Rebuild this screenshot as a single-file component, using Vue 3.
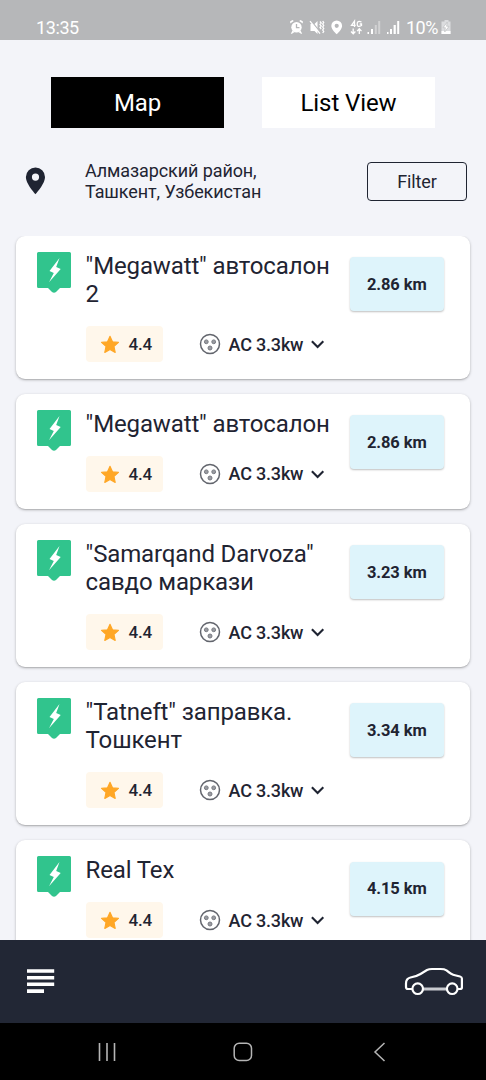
<script setup>
const stations = [
  { lines: ['"Megawatt" автосалон', '2'], distance: '2.86' },
  { lines: ['"Megawatt" автосалон'], distance: '2.86' },
  { lines: ['"Samarqand Darvoza"', 'савдо маркази'], distance: '3.23' },
  { lines: ['"Tatneft" заправка.', 'Тошкент'], distance: '3.34' },
  { lines: ['Real Tex'], distance: '4.15' },
]
</script>

<template>
  <div class="screen">
    <header class="status">
      <span class="clock">13:35</span>
      <svg class="tray" width="118" height="18" viewBox="0 0 118 18">
        <g fill="#fff">
          <circle cx="6.5" cy="9.2" r="5.2" />
          <path d="M.2 5.4V3.2L2.6 2l1.2 1zM12.8 5.4V3.2L10.4 2 9.200 3zM2.500 12.500l2 1.500L2 15.800H.8zM10.500 12.500l-2 1.500 2.500 1.800h1.200z" />
          <path d="M20.500 6h4l3-3v13l-3-3h-4z" />
          <path d="M46.700 2.500a5.400 5.400 0 0 0-5.400 5.400c0 3.500 5.400 8.300 5.400 8.300s5.400-4.800 5.400-8.300a5.400 5.400 0 0 0-5.400-5.400zm0 3.200a2.100 2.100 0 1 1 0 4.200 2.100 2.100 0 0 1 0-4.200z" fill-rule="evenodd" />
          <path d="M77.500 14h1.500v2h-1.500zM81 11h2v5h-2zM97 14h1.500v2H97zM100 11h2v5h-2zM103.600 7h2.200v9h-2.200zM107.200 3h2v13h-2z" />
          <path d="M84.800 7h2v9h-2zM88.200 3h2v13h-2z" opacity=".38" />
        </g>
        <g fill="none" stroke="#fff" stroke-width="1.300">
          <path d="M6.500 6v3.700h3" stroke="#b6b7b9" />
          <path d="M21.200 3l9.600 12" stroke="#b6b7b9" />
          <path d="M20 3.200l10 12.500" />
          <path d="M30 3.500l1.200 1.500-1.200 1.500 1.200 1.500-1.200 1.500 1.200 1.500M32.700 3l1 1.500-1 1.500 1 1.500-1 1.500 1 1.500-1 1.500 1 1.500-1 1.500" />
          <path d="M64.500 8.900V3l-3 4.300h4.200M71.500 4q-4.300-1.800-4.300 2t4.300 1.500V6h-1.800M63.200 10.500v5.300m-2.200-2.300l2.200 2.300 2.200-2.300M69.300 16v-5.200m-2.200 2.300l2.200-2.300 2.200 2.300" />
        </g>
      </svg>
      <span class="percent">10%</span>
      <svg class="battery" width="11" height="16" viewBox="0 0 11 16">
        <path d="M3.500 1h4v1.500h2V15h-9V2.500h3z" fill="#dcdddf" />
        <path d="M.5 12h9v3h-9z" fill="#fff" />
        <path d="M6.200 3.200L2 8.700h2.400L3.700 13l4.300-5.700H5.600z" fill="#fff" stroke="#b6b7b9" stroke-width=".6" />
      </svg>
    </header>

    <nav class="tabs">
      <button class="tab active">Map</button>
      <button class="tab">List View</button>
    </nav>

    <section class="place">
      <svg class="pin" width="20" height="28" viewBox="0 0 20 28">
        <path fill-rule="evenodd" d="M10.500.4A9.600 9.600 0 0 0 .9 10C.9 17 10.500 27.200 10.500 27.200S20 17 20 10A9.600 9.600 0 0 0 10.500.4zm0 6.100a3.600 3.600 0 1 1 0 7.200 3.600 3.600 0 0 1 0-7.200z" fill="#1f2432" />
      </svg>
      <p class="address">Алмазарский район,<br />Ташкент, Узбекистан</p>
      <button class="filter">Filter</button>
    </section>

    <main class="list">
      <article v-for="(s, i) in stations" :key="i" class="card">
        <svg class="marker" width="35" height="42" viewBox="0 0 35 42">
          <path d="M2.500 0h31A1.500 1.500 0 0 1 35 1.500v33a1.500 1.500 0 0 1-1.500 1.500H24l-4 4q-2 1.600-4 0l-4-4H2.500A1.500 1.500 0 0 1 1 34.500v-33A1.500 1.500 0 0 1 2.500 0z" fill="#31c48d" />
          <path d="M23.500 6L13.500 19l4.300 2L13 30.300 24.700 17l-4.500-2z" fill="#fff" />
        </svg>
        <div class="info">
          <h2 class="title"><span v-for="line in s.lines" :key="line">{{ line }}</span></h2>
          <div class="details">
            <span class="rating">
              <svg width="20" height="20" viewBox="0 0 20 20">
                <path d="M10 2.200l2.500 5.500 6 .7-4.500 4 1.200 6L10 15.500l-5.200 2.900 1.200-6-4.500-4 6-.7z" fill="#ffa726" stroke="#ffa726" stroke-width="1.100" stroke-linejoin="round" />
              </svg>
              <span>4.4</span>
            </span>
            <span class="plug">
              <svg width="22" height="22" viewBox="0 0 22 22" fill="none" stroke="#62656d">
                <circle cx="11" cy="11" r="9.500" stroke-width="1.500" />
                <g fill="#999ba1" stroke="#777a81" stroke-width="1">
                  <circle cx="7.300" cy="8.800" r="1.900" />
                  <circle cx="14.700" cy="8.800" r="1.900" />
                  <circle cx="11" cy="15" r="2" />
                </g>
              </svg>
              <span class="power">AC 3.3kw</span>
              <svg width="14" height="10" viewBox="0 0 14 10"><path d="M.9 2.300l5.700 5.700 5.700-5.700" fill="none" stroke="#1f2432" stroke-width="2.100" /></svg>
            </span>
          </div>
        </div>
        <span class="distance">{{ s.distance }} km</span>
      </article>
    </main>

    <footer class="bar">
      <svg width="28" height="26" viewBox="0 0 28 26"><path d="M0 .3h27.200v3.500H0zM0 6.900h27.200v3.500H0zM0 13.500h27.200v3.500H0zM0 20.300h17v3.600H0z" fill="#fff" /></svg>
      <svg width="60" height="30" viewBox="0 0 60 30" fill="none" stroke="#fff" stroke-width="2.200">
        <path d="M9 22H5q-2 0-2-2v-3.500q0-5 4.500-6 6-1 10-3.500l6.500-4q2-1 5-1h8.500q4 0 6 1.300 5 4.200 8.500 5l5 1.200q1.900.5 1.900 2V20.500q0 1.500-2 1.500H54" />
        <path d="M20 22h24" stroke="#c9cbd0" stroke-width="3" />
        <circle cx="14.700" cy="21.700" r="5.300" /><circle cx="49.200" cy="21.700" r="5.300" />
      </svg>
    </footer>
    <div class="system">
      <svg width="20" height="20" viewBox="0 0 20 20"><path d="M2.500 1v18M10 1v18M17.500 1v18" stroke="#b5b5b5" stroke-width="1.600" /></svg>
      <svg width="20" height="20" viewBox="0 0 20 20"><rect x="1.200" y="1.200" width="17.300" height="17.300" rx="5" fill="none" stroke="#b5b5b5" stroke-width="1.500" /></svg>
      <svg width="20" height="20" viewBox="0 0 20 20"><path d="M15.500 1L6 10l9.500 9" fill="none" stroke="#b5b5b5" stroke-width="1.500" /></svg>
    </div>
  </div>
</template>

<style>
body { margin: 0; }
</style>

<style scoped>
.screen { width: 486px; height: 1080px; display: flex; flex-direction: column; overflow: hidden; background: #f3f4f9; color: #1f2432; font-family: Roboto, sans-serif; }
.screen * { box-sizing: border-box; }
svg { display: block; flex: none; }
button { font-family: inherit; padding: 0; border: 0; }
.status { height: 40px; flex: none; display: flex; padding: 18px 0 0 36px; background: #b6b7b9; color: #fff; }
.clock { width: 254px; font-size: 18px; line-height: 19px; letter-spacing: -.4px; }
.tray { margin: 0 -2px 0 0; }
.percent { width: 35px; font-size: 18px; line-height: 19px; letter-spacing: -.5px; }
.battery { margin-top: 1px; }
.tabs { flex: none; display: flex; gap: 38px; padding: 37px 51px 0; }
.tab { width: 173px; height: 50.500px; padding-top: 1px; background: #fff; color: #000; font-size: 24px; letter-spacing: -.1px; }
.active { background: #000; color: #fff; }
.place { flex: none; height: 108px; display: flex; padding-left: 25px; }
.pin { margin-top: 39.400px; }
.address { width: 282px; margin: 32px 0 0 40px; font-size: 18px; line-height: 21.300px; letter-spacing: -.1px; }
.filter { width: 100px; height: 39px; margin-top: 34.500px; padding-bottom: 1px; border: 1.500px solid #1f2432; border-radius: 4px; background: none; color: #1f2432; font-size: 18px; letter-spacing: -.1px; }
.list { flex: 1; min-height: 0; overflow: hidden; display: flex; flex-direction: column; gap: 14.800px; padding: 0 16px; }
.card { flex: none; display: flex; padding: 16px 26px 17px 20px; border-radius: 9px; background: #fff; box-shadow: 0 1px 3px rgba(0, 0, 0, .26), 0 1px 1px rgba(0, 0, 0, .1); }
.info { width: 264px; margin-left: 14.600px; }
.title { margin: 0 0 17.500px; font-size: 24px; font-weight: 400; line-height: 28.500px; letter-spacing: -.13px; white-space: nowrap; }
.title span { display: block; }
.details { display: flex; gap: 36px; }
.rating { width: 77px; height: 36px; padding: 0 0 0 14px; display: flex; align-items: center; gap: 9px; border-radius: 4px; background: #fff7eb; font-size: 17px; font-weight: 500; letter-spacing: -.3px; }
.plug { display: flex; align-items: center; font-size: 18px; font-weight: 500; letter-spacing: -.2px; white-space: nowrap; }
.power { width: 82px; margin-left: 8px; }
.distance { width: 94.400px; height: 54px; margin-top: 5.500px; display: flex; align-items: center; justify-content: center; border-radius: 4px; background: #def4fb; box-shadow: 0 1px 2px rgba(0, 0, 0, .25); font-size: 16.500px; font-weight: 700; letter-spacing: -.1px; }
.bar { flex: none; height: 83px; display: flex; align-items: center; justify-content: space-between; padding: 0 23px 0 27px; background: #222735; }
.system { flex: none; height: 57px; display: flex; align-items: flex-start; justify-content: space-between; padding: 18.500px 97px 0; background: #000; }
</style>
